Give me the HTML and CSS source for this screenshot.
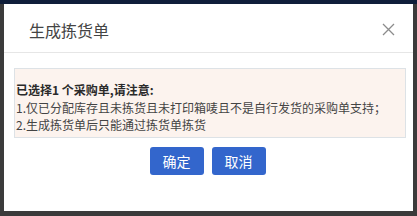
FILE: index.html
```html
<!DOCTYPE html>
<html lang="zh-CN">
<head>
<meta charset="utf-8">
<title>生成拣货单</title>
<link rel="stylesheet" href="styles.css">
</head>
<body>
<div class="backdrop">
  <div class="dialog">
    <div class="dialog-header">
      <span class="dialog-title">生成拣货单</span>
      <span class="close" aria-label="关闭">
        <svg width="13" height="13" viewBox="0 0 13 13"><path d="M1 1L12 12M12 1L1 12" stroke="#8c8c8c" stroke-width="1.3" fill="none"/></svg>
      </span>
    </div>
    <div class="dialog-body">
      <div class="notice">
        <div class="notice-title">已选择1 个采购单,请注意:</div>
        <div class="notice-line">1.仅已分配库存且未拣货且未打印箱唛且不是自行发货的采购单支持；</div>
        <div class="notice-line">2.生成拣货单后只能通过拣货单拣货</div>
      </div>
    </div>
    <div class="dialog-footer">
      <button class="btn">确定</button>
      <button class="btn">取消</button>
    </div>
  </div>
</div>
</body>
</html>
```
FILE: styles.css
```css
html, body {
  margin: 0;
  padding: 0;
}
body {
  width: 417px;
  height: 216px;
  overflow: hidden;
  font-family: "Noto Sans CJK SC", "Liberation Sans", sans-serif;
}
.backdrop {
  box-sizing: border-box;
  width: 417px;
  height: 216px;
  background: #3b3b3b;
  border-top: 4px solid #0f1e3a;
  padding: 0 4px 5px 4px;
}
.dialog {
  box-sizing: border-box;
  width: 409px;
  height: 207px;
  background: #fff;
  display: flex;
  flex-direction: column;
}
.dialog-header {
  box-sizing: border-box;
  height: 49px;
  border-bottom: 1px solid #e6e6e6;
  display: flex;
  align-items: center;
  justify-content: space-between;
  padding: 4px 18px 0 25px;
}
.dialog-title {
  font-size: 16px;
  color: #444;
  line-height: 20px;
}
.close {
  display: flex;
  width: 13px;
  height: 13px;
  margin-top: -2px;
}
.dialog-body {
  padding: 15px 7px 0 10px;
}
.notice {
  box-sizing: border-box;
  height: 70px;
  background: #fcf3ee;
  border: 1px solid #dde2e6;
  padding: 12px 2px 0 1px;
  font-size: 12px;
  line-height: 17.5px;
  color: #444;
}
.notice-title {
  font-weight: bold;
  color: #2a2a2a;
}
.dialog-footer {
  display: flex;
  justify-content: center;
  gap: 8px;
  padding: 9px 0 0 0;
  margin-left: -2px;
}
.btn {
  width: 54px;
  height: 28px;
  border: none;
  border-radius: 3px;
  background: #3366cc;
  color: #fff;
  font-family: "Noto Sans CJK SC", "Liberation Sans", sans-serif;
  font-size: 14px;
  padding: 0;
  line-height: 28px;
}
```
